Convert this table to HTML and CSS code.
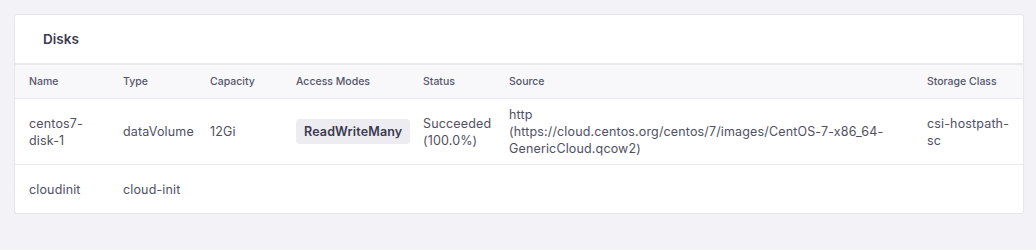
FILE: index.html
```html
<!DOCTYPE html>
<html lang="en">
<head>
    <meta charset="UTF-8">
    <title>Disks</title>
    <link rel="stylesheet" href="styles.css">
</head>
<body>
    <div class="card">
        <div class="card-header">
            <h3>Disks</h3>
        </div>

        <!-- Таблица дисков -->
        <table class="disks">
            <colgroup>
                <col class="c-name">
                <col class="c-type">
                <col class="c-cap">
                <col class="c-access">
                <col class="c-status">
                <col class="c-source">
                <col class="c-class">
            </colgroup>
            <thead>
                <tr>
                    <th>Name</th>
                    <th>Type</th>
                    <th>Capacity</th>
                    <th>Access Modes</th>
                    <th>Status</th>
                    <th>Source</th>
                    <th>Storage Class</th>
                </tr>
            </thead>
            <tbody>
                <tr>
                    <td>centos7-disk-1</td>
                    <td>dataVolume</td>
                    <td>12Gi</td>
                    <td><span class="badge">ReadWriteMany</span></td>
                    <td>Succeeded (100.0%)</td>
                    <td>http<br>(https://cloud.centos.org/centos/7/images/CentOS-7-x86_64-GenericCloud.qcow2)</td>
                    <td>csi-hostpath-<br>sc</td>
                </tr>
                <tr>
                    <td>cloudinit</td>
                    <td>cloud-init</td>
                    <td></td>
                    <td></td>
                    <td></td>
                    <td></td>
                    <td></td>
                </tr>
            </tbody>
        </table>
    </div>
</body>
</html>
```

FILE: styles.css
```css
/* Общие настройки */
body {
    font-family: Inter, "Noto Sans", sans-serif;
    margin: 0;
    padding: 14px 12px 0 14px;
    background-color: #f3f3f7;
    color: #505064;
}

/* Карточка */
.card {
    background-color: #fff;
    border: 1px solid #e6e6eb;
    border-radius: 3px;
    box-shadow: 0 1px 1px rgba(0,0,0,.04);
}

.card-header {
    height: 48px;
    padding: 0 28px;
    display: flex;
    align-items: center;
    border-bottom: 2px solid #e9e9ee;
}

.card-header h3 {
    margin: 0;
    font-size: 13.5px;
    font-weight: 600;
    color: #3a3a50;
}

/* Таблица */
.disks {
    width: 100%;
    border-collapse: collapse;
    table-layout: fixed;
}

.c-name   { width: 94px; }
.c-type   { width: 87px; }
.c-cap    { width: 86px; }
.c-access { width: 127px; }
.c-status { width: 86px; }
.c-source { width: 418px; }

th {
    height: 33px;
    padding: 0 0 0 14px;
    background-color: #f8f8fb;
    border-bottom: 1px solid #e9e9ee;
    text-align: left;
    font-size: 10.5px;
    font-weight: 500;
    color: #55556a;
}

td {
    height: 34px;
    padding: 7px 0 7px 14px;
    border-bottom: 1px solid #e9e9ee;
    font-size: 12.5px;
    letter-spacing: 0.15px;
    line-height: 17px;
    vertical-align: middle;
    word-wrap: break-word;
}

tbody tr:last-child td {
    border-bottom: none;
}

.badge {
    display: inline-block;
    padding: 4px 8px;
    background-color: #ececf1;
    border-radius: 4px;
    font-weight: 600;
    color: #3a3a50;
}
```
